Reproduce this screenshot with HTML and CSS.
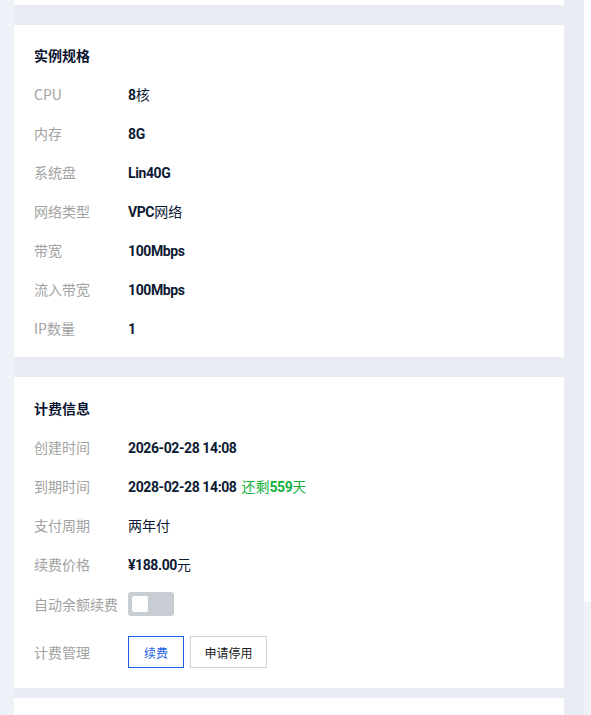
FILE: index.html
```html
<!DOCTYPE html>
<html lang="zh-CN">
  <head>
    <meta charset="UTF-8" />
    <meta name="viewport" content="width=device-width, initial-scale=1.0" />
    <title>实例详情</title>
    <link rel="stylesheet" href="styles.css">
  </head>
  <body>
    <div class="page">
      <div class="gutter"></div>
      <div class="main">
        <div class="card card_top"></div>

        <div class="card">
          <div class="card_title">实例规格</div>
          <div class="info_list">
            <div class="info_row">
              <span class="label">CPU</span>
              <span class="value"><b class="num">8</b>核</span>
            </div>
            <div class="info_row">
              <span class="label">内存</span>
              <span class="value"><b class="num">8G</b></span>
            </div>
            <div class="info_row">
              <span class="label">系统盘</span>
              <span class="value"><b class="num">Lin40G</b></span>
            </div>
            <div class="info_row">
              <span class="label">网络类型</span>
              <span class="value"><b class="num">VPC</b>网络</span>
            </div>
            <div class="info_row">
              <span class="label">带宽</span>
              <span class="value"><b class="num">100Mbps</b></span>
            </div>
            <div class="info_row">
              <span class="label">流入带宽</span>
              <span class="value"><b class="num">100Mbps</b></span>
            </div>
            <div class="info_row">
              <span class="label">IP数量</span>
              <span class="value"><b class="num">1</b></span>
            </div>
          </div>
        </div>

        <div class="card card_billing">
          <div class="card_title">计费信息</div>
          <div class="info_list">
            <div class="info_row">
              <span class="label">创建时间</span>
              <span class="value"><b class="num">2026-02-28 14:08</b></span>
            </div>
            <div class="info_row">
              <span class="label">到期时间</span>
              <span class="value"><b class="num">2028-02-28 14:08</b><span class="remain">还剩<b class="num">559</b>天</span></span>
            </div>
            <div class="info_row">
              <span class="label">支付周期</span>
              <span class="value">两年付</span>
            </div>
            <div class="info_row">
              <span class="label">续费价格</span>
              <span class="value"><b class="num">¥188.00</b>元</span>
            </div>
            <div class="info_row switch_row">
              <span class="label">自动余额续费</span>
              <span class="switch"><span class="knob"></span></span>
            </div>
            <div class="info_row btn_row">
              <span class="label">计费管理</span>
              <div class="btns">
                <button class="btn btn_primary">续费</button>
                <button class="btn btn_stop">申请停用</button>
              </div>
            </div>
          </div>
        </div>

        <div class="card card_bottom"></div>
      </div>
      <div class="right_gap"></div>
      <div class="side_panel">
        <div class="side_white"></div>
      </div>
    </div>
  </body>
</html>
```

FILE: styles.css
```css
html, body {
  margin: 0;
  padding: 0;
}

body {
  background-color: #e9ecf4;
  font-family: "Noto Sans CJK SC", "Noto Sans", sans-serif;
  font-size: 14px;
  color: #0d1a33;
}

.page {
  display: flex;
  height: 715px;
  overflow: hidden;
}

.gutter {
  width: 14px;
  flex-shrink: 0;
  background-color: #eef1f8;
}

.main {
  width: 550px;
  flex-shrink: 0;
  display: flex;
  flex-direction: column;
}

.right_gap {
  width: 20px;
  flex-shrink: 0;
}

.side_panel {
  flex: 1;
  background-color: #eef1f8;
}

.side_white {
  height: 602px;
  background-color: #ffffff;
}

.card {
  background-color: #ffffff;
  padding: 19px 20px 18px;
  margin-bottom: 20px;
}

.card_top {
  height: 5px;
  padding: 0;
}

.card_billing {
  padding: 20px 20px 20px;
  margin-bottom: 10px;
}

.card_bottom {
  flex: 1;
  padding: 0;
  margin-bottom: 0;
}

.card_title {
  height: 22px;
  font-weight: 700;
  line-height: 22px;
  color: #0b1530;
}

.info_list {
  display: flex;
  flex-direction: column;
  gap: 17px;
  margin-top: 17px;
}

.info_row {
  display: flex;
  align-items: center;
  height: 22px;
  line-height: 22px;
}

.label {
  width: 94px;
  flex-shrink: 0;
  color: #a2a2a2;
}

.value {
  color: #0d1a33;
}

.num {
  font-family: "Roboto", "Noto Sans", sans-serif;
  font-weight: 700;
  letter-spacing: -0.4px;
}

.remain {
  margin-left: 5px;
  color: #12b03c;
}

.switch_row {
  height: 24px;
}

.switch {
  display: inline-block;
  position: relative;
  width: 46px;
  height: 24px;
  border-radius: 3px;
  background-color: #c8ccd3;
}

.knob {
  position: absolute;
  left: 4px;
  top: 4px;
  width: 16px;
  height: 16px;
  border-radius: 2px;
  background-color: #ffffff;
}

.btn_row {
  height: 32px;
  margin-top: 3px;
}

.btns {
  display: flex;
  gap: 6px;
}

.btn {
  box-sizing: border-box;
  height: 32px;
  padding: 0;
  border: 1px solid #d4d4d4;
  background-color: #ffffff;
  color: #1a1a1a;
  font-family: "Noto Sans CJK SC", sans-serif;
  font-size: 12px;
  font-weight: 400;
  cursor: pointer;
}

.btn_primary {
  width: 56px;
  border-color: #1f63e0;
  color: #1f63e0;
}

.btn_stop {
  width: 77px;
}
```
